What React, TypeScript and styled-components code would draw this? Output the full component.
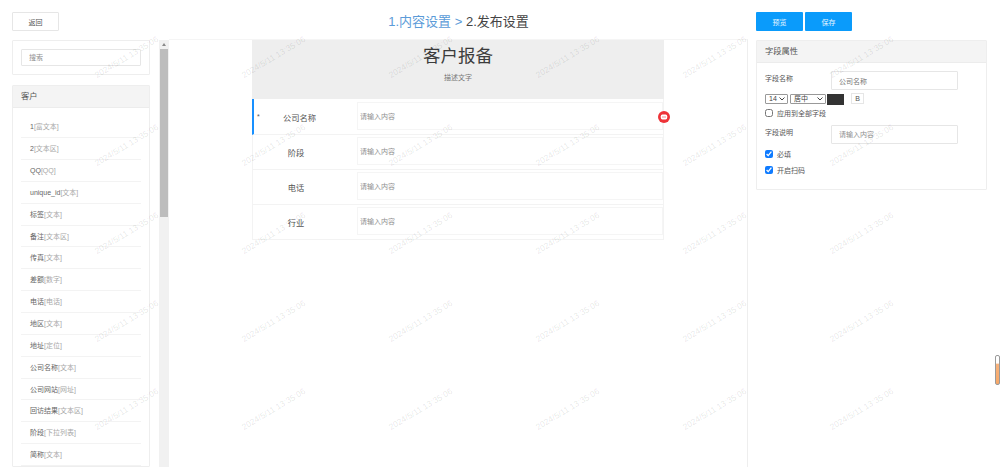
import React from 'react';
import styled, { createGlobalStyle } from 'styled-components';

const GlobalStyle = createGlobalStyle`
  html, body {
    margin: 0;
    height: 467px;
    overflow: hidden;
    background: #fff;
    font-family: "Liberation Sans", "Noto Sans CJK SC", sans-serif;
    color: #555;
  }
  * { box-sizing: border-box; }
  input::placeholder { color: #909090; opacity: 1; }
`;

const Page = styled.div`
  position: relative;
  display: grid;
  grid-template-columns: 157px 587px 231px;
  grid-template-rows: 28px 427px;
  width: 1000px;
  height: 467px;
  padding: 12px 13px 0 12px;
  overflow: hidden;
`;

const TopLeft = styled.div`
  display: flex;
  align-items: flex-start;
`;

const TopRight = styled.div`
  display: flex;
  align-items: flex-start;
  gap: 2px;
`;

const Title = styled.div`
  padding-right: 8px;
  font-size: 13px;
  line-height: 20px;
  text-align: center;
  color: #444;
  white-space: pre;
`;

const TitleStep = styled.span`
  color: #5b9bd8;
`;

const GhostButton = styled.button`
  width: 47px;
  height: 19px;
  padding: 0;
  border: 1px solid #e6e6e6;
  border-radius: 1px;
  background: #fff;
  font: inherit;
  font-size: 7px;
  color: #555;
`;

const PrimaryButton = styled.button`
  width: 47px;
  height: 19px;
  padding: 0;
  border: 0;
  border-radius: 1px;
  background: #0a9bfb;
  font: inherit;
  font-size: 7px;
  color: #e8f6ff;
`;

const LeftArea = styled.div`
  display: flex;
  gap: 9px;
  height: 427px;
  overflow: hidden;
`;

const LeftColumn = styled.div`
  display: flex;
  flex-direction: column;
  gap: 10px;
  width: 138px;
`;

const SearchCard = styled.div`
  height: 36px;
  padding: 8px;
  border: 1px solid #eee;
  border-radius: 1px;
`;

const SearchInput = styled.input`
  display: block;
  width: 120px;
  height: 17px;
  padding: 0 7px;
  border: 1px solid #e6e6e6;
  border-radius: 1px;
  font: inherit;
  font-size: 7px;
`;

const Panel = styled.section`
  border: 1px solid #eee;
  border-radius: 1px;
`;

const PanelHead = styled.div`
  height: 22px;
  padding-left: 8px;
  background: #f4f4f4;
  border-bottom: 1px solid #ececec;
  font-size: 8.25px;
  line-height: 22px;
  color: #555;
`;

const FieldList = styled.ul`
  margin: 0;
  padding: 8px 8px 0;
  list-style: none;
`;

const FieldItem = styled.li`
  height: 21.87px;
  padding-left: 9px;
  border-bottom: 1px solid #f3f3f3;
  font-size: 7px;
  line-height: 21px;
  color: #666;
`;

const FieldType = styled.span`
  color: #a8a8a8;
`;

const Scrollbar = styled.div`
  position: relative;
  width: 10px;
  height: 427px;
  padding: 9px 1px 0;
  background: #f1f1f1;
`;

const ScrollThumb = styled.div`
  width: 8px;
  height: 168px;
  background: #bdbdbd;
`;

const ScrollArrow = styled.div`
  position: absolute;
  top: 3px;
  left: 3px;
  border-left: 2px solid transparent;
  border-right: 2px solid transparent;
  border-bottom: 3px solid #8a8a8a;
`;

const Canvas = styled.main`
  width: 579px;
  height: 428px;
  margin-top: -1px;
  padding-left: 83px;
  border-top: 1px solid #f5f5f5;
  border-right: 1px solid #eee;
`;

const FormSheet = styled.div`
  width: 412px;
`;

const FormHead = styled.header`
  height: 59px;
  padding-top: 5px;
  background: #eeeeee;
  text-align: center;
`;

const FormTitle = styled.h1`
  margin: 0;
  font-size: 17.5px;
  font-weight: 400;
  line-height: 22px;
  color: #3c3c3c;
`;

const FormDesc = styled.p`
  margin: 6px 0 0;
  font-size: 7px;
  line-height: 10px;
  color: #777;
`;

const FormRow = styled.div<{ $active?: boolean }>`
  position: relative;
  display: flex;
  height: ${({ $active }) => ($active ? 36 : 35)}px;
  border-right: 1px solid #f3f3f3;
  border-bottom: 1px solid #f3f3f3;
  border-left: ${({ $active }) => ($active ? '2px solid #1890ff' : '1px solid #f3f3f3')};
`;

const LabelCell = styled.div<{ $active?: boolean }>`
  display: flex;
  align-items: center;
  flex: none;
  width: ${({ $active }) => ($active ? 103 : 104)}px;
  padding: ${({ $active }) => ($active ? '0 25px 0 3px' : '0 18px 0 0')};
  font-size: 8.25px;
  color: #555;
`;

const Star = styled.span`
  width: 10px;
  font-size: 7px;
`;

const LabelText = styled.span`
  flex: 1;
  text-align: center;
`;

const RowInput = styled.input<{ $active?: boolean }>`
  flex: 1;
  min-width: 0;
  height: 28px;
  margin: ${({ $active }) => ($active ? '3px 0 0' : '2px 0 0')};
  padding: 0 2px;
  border: 1px solid #f5f5f5;
  font: inherit;
  font-size: 7px;
  background: transparent;
`;

const RemoveIcon = styled.svg`
  position: absolute;
  top: 12px;
  right: -7px;
  width: 12px;
  height: 12px;
`;

const PropsPanel = styled(Panel)`
  align-self: flex-start;
  height: 150px;
`;

const PropsBody = styled.div`
  display: flex;
  flex-direction: column;
  padding: 8px 8px 0;
`;

const PropRow = styled.div`
  display: flex;
  align-items: flex-start;
`;

const PropLabel = styled.span`
  width: 66px;
  padding-top: 3px;
  font-size: 7px;
  line-height: 10px;
  color: #555;
`;

const PropInput = styled.input`
  width: 127px;
  height: 19px;
  padding: 0 7px;
  border: 1px solid #e6e6e6;
  border-radius: 1px;
  font: inherit;
  font-size: 7px;
  color: #777;
`;

const ToolRow = styled.div`
  display: flex;
  align-items: flex-start;
  gap: 2px;
  height: 14px;
  margin-top: 4px;
`;

const MiniSelect = styled.select<{ $wide?: boolean }>`
  width: ${({ $wide }) => ($wide ? 36 : 23)}px;
  height: 10px;
  padding: 0 0 0 3px;
  border: 1px solid #999;
  border-radius: 1px;
  appearance: none;
  background: #fff url("data:image/svg+xml,%3Csvg xmlns='http://www.w3.org/2000/svg' width='6' height='4'%3E%3Cpath d='M.5.5 3 3 5.500.5' fill='none' stroke='%23444'/%3E%3C/svg%3E") no-repeat right 2px center;
  font: inherit;
  font-size: 7px;
  line-height: 8px;
  color: #444;
`;

const ColorChip = styled.div`
  width: 17px;
  height: 11px;
  margin-left: -1px;
  background: #333;
`;

const BoldButton = styled.button`
  width: 13px;
  height: 11px;
  margin: -1px 0 0 5px;
  padding: 0;
  border: 1px solid #e6e6e6;
  background: #fff;
  font: inherit;
  font-size: 7px;
  color: #555;
`;

const CheckRow = styled.label<{ $gap: number; $top?: number }>`
  display: flex;
  align-items: center;
  gap: 4px;
  height: 10px;
  margin-top: ${({ $top }) => $top ?? 0}px;
  margin-bottom: ${({ $gap }) => $gap}px;
  font-size: 7px;
  color: #555;
`;

const CheckBox = styled.input`
  width: 8px;
  height: 8px;
  margin: 0;
  accent-color: #0f7bff;
`;

const SideHandle = styled.div`
  position: absolute;
  top: 355px;
  right: 0;
  width: 5px;
  height: 30px;
  border: 1px solid #9a9a9a;
  border-radius: 2px;
  background: linear-gradient(#fff 0, #fff 25%, #f7b27c 30%, #f7a868 100%);
`;

const WatermarkLayer = styled.div`
  position: absolute;
  top: 13px;
  left: 53px;
  display: grid;
  grid-template-columns: repeat(6, 147px);
  grid-auto-rows: 88px;
  pointer-events: none;
`;

const Watermark = styled.div`
  display: flex;
  align-items: center;
  justify-content: center;
  font-size: 8.5px;
  white-space: nowrap;
  color: rgba(0, 0, 0, 0.11);
  transform: rotate(-31deg);
`;

const fields: [string, string][] = [
  ['1', '富文本'],
  ['2', '文本区'],
  ['QQ', 'QQ'],
  ['unique_id', '文本'],
  ['标签', '文本'],
  ['备注', '文本区'],
  ['传真', '文本'],
  ['差额', '数字'],
  ['电话', '电话'],
  ['地区', '文本'],
  ['地址', '定位'],
  ['公司名称', '文本'],
  ['公司网站', '网址'],
  ['回访结果', '文本区'],
  ['阶段', '下拉列表'],
  ['简称', '文本'],
];

const formRows = ['公司名称', '阶段', '电话', '行业'];

const App = () => {
  return (
    <Page>
      <GlobalStyle />
      <TopLeft>
        <GhostButton>返回</GhostButton>
      </TopLeft>
      <Title>
        <TitleStep>1.内容设置 &gt; </TitleStep>2.发布设置
      </Title>
      <TopRight>
        <PrimaryButton>预览</PrimaryButton>
        <PrimaryButton>保存</PrimaryButton>
      </TopRight>

      <LeftArea>
        <LeftColumn>
          <SearchCard>
            <SearchInput placeholder="搜索" />
          </SearchCard>
          <Panel>
            <PanelHead>客户</PanelHead>
            <FieldList>
              {fields.map(([name, type]) => (
                <FieldItem key={name}>
                  {name}
                  <FieldType>[{type}]</FieldType>
                </FieldItem>
              ))}
            </FieldList>
          </Panel>
        </LeftColumn>
        <Scrollbar>
          <ScrollArrow />
          <ScrollThumb />
        </Scrollbar>
      </LeftArea>

      <Canvas>
        <FormSheet>
          <FormHead>
            <FormTitle>客户报备</FormTitle>
            <FormDesc>描述文字</FormDesc>
          </FormHead>
          {formRows.map((label, i) => (
            <FormRow key={label} $active={i === 0}>
              <LabelCell $active={i === 0}>
                {i === 0 && <Star>*</Star>}
                <LabelText>{label}</LabelText>
              </LabelCell>
              <RowInput $active={i === 0} placeholder="请输入内容" />
              {i === 0 && (
                <RemoveIcon viewBox="0 0 12 12">
                  <circle cx="6" cy="6" r="6" fill="#ee3338" />
                  <rect x="2.8" y="3.6" width="6.4" height="4.8" rx="1.6" fill="#fff" />
                  <rect x="4" y="5.5" width="4" height="1" fill="#f08a8c" />
                </RemoveIcon>
              )}
            </FormRow>
          ))}
        </FormSheet>
      </Canvas>

      <PropsPanel>
        <PanelHead>字段属性</PanelHead>
        <PropsBody>
          <PropRow>
            <PropLabel>字段名称</PropLabel>
            <PropInput defaultValue="公司名称" />
          </PropRow>
          <ToolRow>
            <MiniSelect defaultValue="14">
              <option>14</option>
            </MiniSelect>
            <MiniSelect $wide defaultValue="居中">
              <option>居中</option>
            </MiniSelect>
            <ColorChip />
            <BoldButton>B</BoldButton>
          </ToolRow>
          <CheckRow $gap={7}>
            <CheckBox type="checkbox" />
            应用到全部字段
          </CheckRow>
          <PropRow>
            <PropLabel>字段说明</PropLabel>
            <PropInput placeholder="请输入内容" />
          </PropRow>
          <CheckRow $gap={6} $top={5}>
            <CheckBox type="checkbox" defaultChecked />
            必填
          </CheckRow>
          <CheckRow $gap={0}>
            <CheckBox type="checkbox" defaultChecked />
            开启扫码
          </CheckRow>
        </PropsBody>
      </PropsPanel>

      <SideHandle />
      <WatermarkLayer>
        {Array.from({ length: 30 }, (_, i) => (
          <Watermark key={i}>2024/5/11 13:35:06</Watermark>
        ))}
      </WatermarkLayer>
    </Page>
  );
};

export default App;
